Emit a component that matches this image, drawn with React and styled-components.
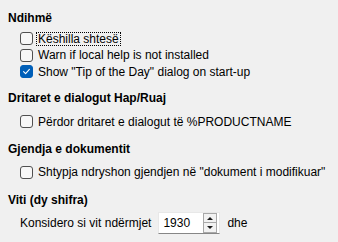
import React from "react";
import styled, { createGlobalStyle } from "styled-components";

const GlobalStyle = createGlobalStyle`
  html, body { margin: 0; padding: 0; background: #f0f0f0; }
  body {
    font-family: "Liberation Sans", Arial, sans-serif;
    font-size: 12px;
    color: #000;
    width: 338px;
    height: 242px;
    overflow: hidden;
  }
`;

const Page = styled.div`
  display: flex;
  flex-direction: column;
  padding: 9.5px 8px 0 8px;
`;

const Section = styled.section`
  display: flex;
  flex-direction: column;
  margin-top: ${(p) => p.$top || 0}px;
`;

const Heading = styled.div`
  font-weight: 700;
  height: 16px;
  line-height: 16px;
  white-space: nowrap;
`;

const OptionList = styled.div`
  display: flex;
  flex-direction: column;
  padding-left: 12px;
  margin-top: ${(p) => p.$gap}px;
`;

const CheckRow = styled.label`
  display: flex;
  align-items: center;
  height: 16.5px;
  white-space: nowrap;
`;

const Box = styled.span`
  flex: none;
  box-sizing: border-box;
  width: 13px;
  height: 13px;
  border-radius: 3px;
  border: 1px solid ${(p) => (p.$checked ? "#005fb8" : "#505050")};
  background: ${(p) => (p.$checked ? "#005fb8" : "#f7f7f7")};
  display: flex;
  align-items: center;
  justify-content: center;
`;

const LabelText = styled.span`
  margin-left: 3px;
  padding: 0 1px 0 1px;
  border: 1px dotted ${(p) => (p.$focus ? "#000" : "transparent")};
  line-height: 12px;
  height: 12px;
  display: flex;
  align-items: center;
`;

const SpinRow = styled.div`
  display: flex;
  align-items: center;
  padding-left: 12px;
  margin-top: ${(p) => p.$gap}px;
  height: 22px;
  line-height: 16px;
  white-space: nowrap;
`;

const SpinBox = styled.div`
  box-sizing: border-box;
  margin-left: 7px;
  width: 62px;
  height: 22px;
  background: #fff;
  border: 1px solid #e8e8e8;
  border-bottom-color: #868686;
  display: flex;
  align-items: center;
  justify-content: space-between;
  padding: 0 2px 0 4px;
`;

const SpinValue = styled.span`
  line-height: 16px;
`;

const SpinButtons = styled.div`
  display: flex;
  flex-direction: column;
  width: 14px;
  height: 20px;
  box-sizing: border-box;
  border: 1px solid #a8a8a8;
  background: #f2f2f2;
`;

const SpinBtn = styled.div`
  flex: 1;
  display: flex;
  align-items: center;
  justify-content: center;
  border-top: ${(p) => (p.$down ? "1px solid #a8a8a8" : "none")};
`;

const Arrow = styled.span`
  width: 0;
  height: 0;
  border-left: 3px solid transparent;
  border-right: 3px solid transparent;
  ${(p) =>
    p.$down
      ? "border-top: 3px solid #1a1a1a;"
      : "border-bottom: 3px solid #1a1a1a;"}
`;

const After = styled.span`
  margin-left: 7px;
`;

function Check({ checked, focus, children }) {
  return (
    <CheckRow>
      <Box $checked={checked}>
        {checked && (
          <svg width="9" height="9" viewBox="0 0 9 9">
            <path
              d="M1.6 4.7 L3.6 6.6 L7.4 2.4"
              fill="none"
              stroke="#fff"
              strokeWidth="1.1"
              strokeLinecap="round"
              strokeLinejoin="round"
            />
          </svg>
        )}
      </Box>
      <LabelText $focus={focus}>{children}</LabelText>
    </CheckRow>
  );
}

export default function App() {
  return (
    <>
      <GlobalStyle />
      <Page>
        <Section>
          <Heading>Ndihmë</Heading>
          <OptionList $gap={5}>
            <Check focus>Këshilla shtesë</Check>
            <Check>Warn if local help is not installed</Check>
            <Check checked>Show "Tip of the Day" dialog on start-up</Check>
          </OptionList>
        </Section>
        <Section $top={9.75}>
          <Heading>Dritaret e dialogut Hap/Ruaj</Heading>
          <OptionList $gap={7.75}>
            <Check>Përdor dritaret e dialogut të %PRODUCTNAME</Check>
          </OptionList>
        </Section>
        <Section $top={10.75}>
          <Heading>Gjendja e dokumentit</Heading>
          <OptionList $gap={7.15}>
            <Check>Shtypja ndryshon gjendjen në "dokument i modifikuar"</Check>
          </OptionList>
        </Section>
        <Section $top={11.65}>
          <Heading>Viti (dy shifra)</Heading>
          <SpinRow $gap={3.9}>
            <span>Konsidero si vit ndërmjet</span>
            <SpinBox>
              <SpinValue>1930</SpinValue>
              <SpinButtons>
                <SpinBtn>
                  <Arrow />
                </SpinBtn>
                <SpinBtn $down>
                  <Arrow $down />
                </SpinBtn>
              </SpinButtons>
            </SpinBox>
            <After>dhe</After>
          </SpinRow>
        </Section>
      </Page>
    </>
  );
}
